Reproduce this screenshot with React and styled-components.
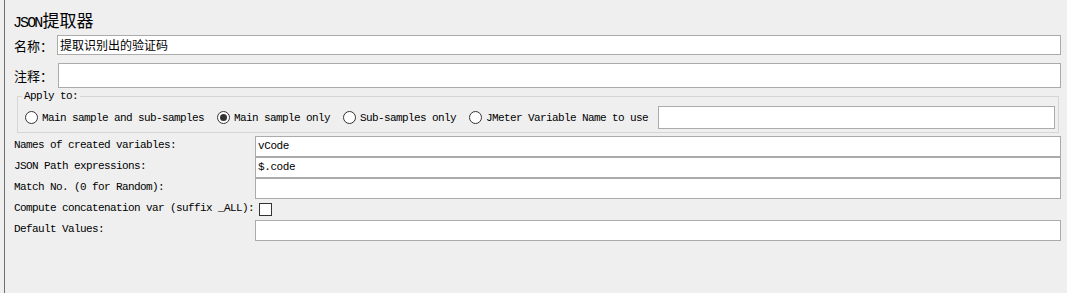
import React from 'react'
import styled, {createGlobalStyle} from 'styled-components'

const GlobalStyle = createGlobalStyle`
html, body{
    margin: 0;
    padding: 0;
    background: #efefef;
}
*{
    box-sizing: border-box;
}
`

const mono = `"Liberation Mono", "Noto Sans CJK SC", monospace`
const cjk = `"Noto Sans CJK SC", "Liberation Sans", sans-serif`

const options = [
    {label: 'Main sample and sub-samples', checked: false},
    {label: 'Main sample only', checked: true},
    {label: 'Sub-samples only', checked: false},
    {label: 'JMeter Variable Name to use', checked: false},
]

const fields = [
    {label: 'Names of created variables:', value: 'vCode'},
    {label: 'JSON Path expressions:', value: '$.code'},
    {label: 'Match No. (0 for Random):', value: ''},
    {label: 'Compute concatenation var (suffix _ALL):', checkbox: true},
    {label: 'Default Values:', value: ''},
]

const App = ()=>{
    return(
        <Page>
            <GlobalStyle/>
            <Panel>
                <Title>
                    <Latin>JSON</Latin>提取器
                </Title>

                <NameRow>
                    <CnLabel>名称：</CnLabel>
                    <TextBox $height={20} $cn>提取识别出的验证码</TextBox>
                </NameRow>
                <CommentRow>
                    <CnLabel>注释：</CnLabel>
                    <TextBox $height={25} $offset={1}></TextBox>
                </CommentRow>

                <ApplyBox>
                    <Legend>Apply to:</Legend>
                    <RadioRow>
                        {options.map((opt)=>(
                            <RadioItem key={opt.label}>
                                <RadioCircle $checked={opt.checked}/>
                                <span>{opt.label}</span>
                            </RadioItem>
                        ))}
                        <VarInput/>
                    </RadioRow>
                </ApplyBox>

                <Fields>
                    {fields.map((f)=>(
                        <React.Fragment key={f.label}>
                            <FieldLabel>{f.label}</FieldLabel>
                            {f.checkbox
                                ? <CheckCell><CheckBox/></CheckCell>
                                : <FieldInput>{f.value}</FieldInput>}
                        </React.Fragment>
                    ))}
                </Fields>
            </Panel>
        </Page>
    )
}

const Page = styled.div`
width: 1067px;
height: 293px;
padding-left: 4px;
background: #efefef;
overflow: hidden;
`

const Panel = styled.div`
height: 293px;
border-left: 1px solid #6f6f6f;
padding: 8px 6px 0 9px;
display: flex;
flex-direction: column;
`

const Title = styled.div`
height: 24px;
line-height: 24px;
margin: 0 0 3px -1px;
font-family: ${cjk};
font-size: 17px;
color: #000;
`

const Latin = styled.span`
font-family: ${mono};
font-size: 15px;
letter-spacing: -1.9px;
margin-right: 1px;
`

const NameRow = styled.div`
display: flex;
align-items: center;
height: 20px;
margin-bottom: 8px;
`

const CommentRow = styled.div`
display: flex;
align-items: center;
height: 25px;
`

const CnLabel = styled.div`
width: 43px;
font-family: ${cjk};
font-size: 13px;
color: #000;
white-space: nowrap;
`

const TextBox = styled.div`
flex: 1;
height: ${p => p.$height}px;
margin-left: ${p => p.$offset || 0}px;
background: #fff;
border: 1px solid #ababab;
padding: 0 2px;
font-family: ${p => p.$cn ? cjk : mono};
font-size: 12px;
line-height: ${p => p.$height - 2}px;
color: #000;
`

const ApplyBox = styled.fieldset`
margin: 1px 2px 0 3px;
padding: 3px 3px 3px 7px;
border: 1px solid #d6d6d6;
min-width: 0;
`

const Legend = styled.legend`
margin-left: -3px;
padding: 0 2px;
font-family: ${mono};
font-size: 11px;
letter-spacing: -0.6px;
line-height: 14px;
color: #000;
`

const RadioRow = styled.div`
display: flex;
align-items: center;
height: 23px;
gap: 13px;
`

const RadioItem = styled.label`
display: flex;
align-items: center;
gap: 4px;
font-family: ${mono};
font-size: 11px;
letter-spacing: -0.6px;
color: #000;
white-space: nowrap;
`

const RadioCircle = styled.span`
width: 13px;
height: 13px;
border-radius: 50%;
border: 1px solid #333;
background: #fff;
display: flex;
align-items: center;
justify-content: center;
&::after{
    content: '';
    display: ${p => p.$checked ? 'block' : 'none'};
    width: 7px;
    height: 7px;
    border-radius: 50%;
    background: #333;
}
`

const VarInput = styled.div`
flex: 1;
height: 23px;
margin-left: -3px;
background: #fff;
border: 1px solid #ababab;
`

const Fields = styled.div`
margin-top: 3px;
display: grid;
grid-template-columns: 241px 1fr;
grid-auto-rows: 21px;
`

const FieldLabel = styled.div`
display: flex;
align-items: center;
padding-bottom: 3px;
font-family: ${mono};
font-size: 11px;
letter-spacing: -0.6px;
color: #000;
white-space: nowrap;
`

const FieldInput = styled.div`
height: 21px;
background: #fff;
border: 1px solid #ababab;
padding: 0 2px;
font-family: ${mono};
font-size: 11px;
letter-spacing: -0.4px;
line-height: 19px;
color: #000;
`

const CheckCell = styled.div`
display: flex;
align-items: center;
padding-left: 4px;
`

const CheckBox = styled.span`
width: 13px;
height: 13px;
border: 1px solid #333;
background: #fff;
`

export default App
